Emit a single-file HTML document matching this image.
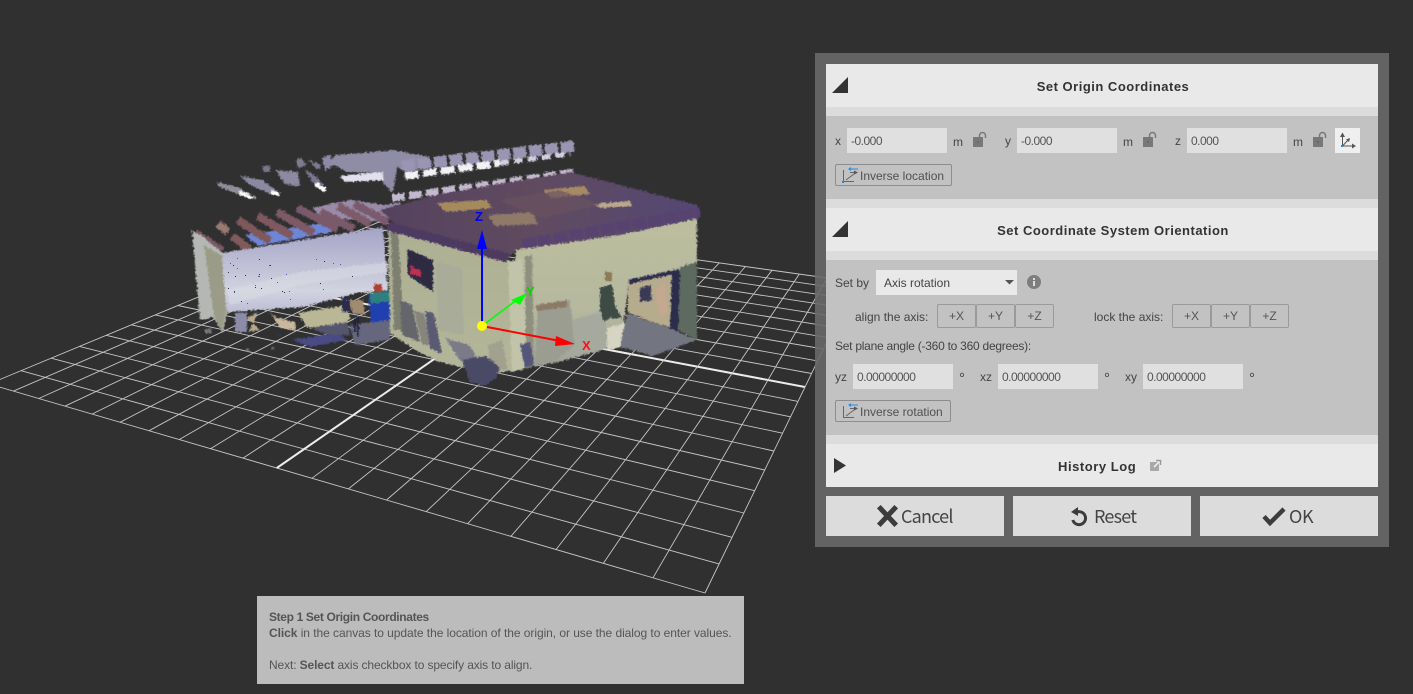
<!DOCTYPE html>
<html><head><meta charset="utf-8">
<style>
html,body{margin:0;padding:0;background:#303030}
#r{position:relative;width:1413px;height:694px;overflow:hidden;background:#303030;font-family:"Liberation Sans","Noto Sans CJK JP",sans-serif;font-size:12px;color:#444}
#r div,#r span.t{position:absolute}
.t{white-space:nowrap;line-height:16px}
.b{background:#e9e9e9;left:826px;width:552px;height:43px}
.s{background:#dcdcdc;left:826px;width:552px}
.g{background:#c2c2c2;left:826px;width:552px}
.h{left:848px;width:530px;text-align:center;font-weight:bold;font-size:13px;letter-spacing:.5px;color:#333;line-height:45px;height:43px}
.i{background:#e0e0e0;width:96px;height:25px;line-height:27px;padding-left:4px;color:#555;letter-spacing:-.5px}
.ib{border:1px solid #8d8d8d;border-radius:2px;box-sizing:border-box;height:22px;line-height:22px;color:#505050;padding-left:24px}
.bg{border:1px solid #9a9a9a;border-radius:2px;box-sizing:border-box;height:24px;width:39px;text-align:center;line-height:23px;color:#555}
.fb{background:#dcdcdc;top:496px;width:178px;height:40px}
.ft{font-family:"Noto Sans CJK JP","Liberation Sans",sans-serif;font-size:18px;line-height:40px;top:496px;color:#444;letter-spacing:-.8px}
.d{font-size:15px}
svg{position:absolute;left:0;top:0}
</style></head><body>
<div id="r">
<svg width="1413" height="694" viewBox="0 0 1413 694">
<defs>
<filter id="rough" filterUnits="userSpaceOnUse" x="0" y="0" width="1413" height="694" color-interpolation-filters="sRGB">
<feGaussianBlur in="SourceGraphic" stdDeviation=".6" result="b"/>
<feTurbulence type="fractalNoise" baseFrequency=".4" numOctaves="2" seed="3" result="n"/>
<feDisplacementMap in="b" in2="n" scale="4" xChannelSelector="R" yChannelSelector="G"/>
</filter>
<linearGradient id="ww" x1="0" y1="0" x2="0" y2="1"><stop offset="0" stop-color="#a4a3c6"/><stop offset=".45" stop-color="#c0c0d6"/><stop offset=".75" stop-color="#d2d4e0"/><stop offset="1" stop-color="#bdbdd6"/></linearGradient>
<linearGradient id="lw" x1="0" y1="0" x2="0" y2="1"><stop offset="0" stop-color="#aeb094"/><stop offset="1" stop-color="#b4b69a"/></linearGradient>
<linearGradient id="rw" x1="0" y1="0" x2="0" y2="1"><stop offset="0" stop-color="#bcbe9e"/><stop offset=".6" stop-color="#b7b99f"/><stop offset="1" stop-color="#9fa39a"/></linearGradient>
<linearGradient id="rf" x1="0" y1="0" x2="1" y2="0"><stop offset="0" stop-color="#55425e"/><stop offset=".5" stop-color="#604b60"/><stop offset="1" stop-color="#544774"/></linearGradient>
</defs>
<g id="grid" fill="none" stroke="#c6c6c6" stroke-width=".9"></g>
<g filter="url(#rough)">
<!-- back fragments -->
<polygon points="217,182 240,188 256,198 250,199 232,192 218,186" fill="#8f8f9a"/>
<polygon points="240,191 256,198 250,199 238,194" fill="#fff"/>
<polygon points="240,176 262,180 280,193 270,194 250,185" fill="#8a89a0"/>
<polygon points="272,190 280,193 278,196 270,194" fill="#fff"/>
<polygon points="276,170 298,172 300,186 285,184" fill="#8c8aa0"/>
<polygon points="262,166 270,166 270,172 263,172" fill="#77768c"/>
<polygon points="296,160 302,158 306,166 298,168" fill="#7e7a90"/>
<polygon points="305,170 316,176 326,188 312,182" fill="#7b7891"/>
<polygon points="316,182 326,188 325,192 314,186" fill="#fff"/>
<polygon points="322,158 330,155 335,165 325,170" fill="#8d8aa5"/>
<polygon points="308,160 322,165 318,170" fill="#7d7a92"/>
<polygon points="335,155 395,150 430,157 432,165 407,173 397,167 393,193 383,183 382,173 347,172 330,163" fill="#8f8ca6"/>
<path d="M402 166L575 146" stroke="#9a95b2" stroke-width="11" stroke-dasharray="13 3" fill="none"/>
<path d="M405 176L500 163" stroke="#f2f1f6" stroke-width="7" stroke-dasharray="14 4" fill="none"/>
<path d="M500 163L570 154" stroke="#d2cfdf" stroke-width="5" stroke-dasharray="9 5" fill="none"/>
<polygon points="340,176 382,172 384,180 345,182" fill="#e2e0ec"/>
<path d="M392 198L575 172" stroke="#c4b9ce" stroke-width="7" stroke-dasharray="13 4" fill="none"/>
<polygon points="312,208 350,200 385,205 400,202 400,208 385,222 352,220 320,216" fill="#9a8ca8"/>
<!-- blue sky behind beams -->
<polygon points="245,235 330,222 332,232 258,246" fill="#6f85d5"/>
<g fill="none" stroke-width="8">
<path d="M195 233L222 251" stroke="#7a5a62"/>
<path d="M218 224L228 232" stroke="#9a7a70"/>
<path d="M232 236L249 249" stroke="#805a5c"/>
<path d="M238 220L270 241" stroke="#80585c"/>
<path d="M258 216L292 236" stroke="#7f5860"/>
<path d="M277 212L314 233" stroke="#7d5a65"/>
<path d="M297 208L338 229" stroke="#7a5a6a"/>
<path d="M320 212L354 229" stroke="#7a5a6a"/>
<path d="M338 206L370 224" stroke="#7c5c6a"/>
<path d="M354 204L388 222" stroke="#7a5a6e"/>
</g>
<!-- left end + white wall -->
<polygon points="192,230 203,237 223,253 227,312 223,333 213,317 200,320" fill="#b5b7b4"/>
<polygon points="204,245 222,256 226,310 222,332 214,316" fill="#9a9c88"/>
<polygon points="222,253 383,227 388,290 357,293 303,307 227,312" fill="url(#ww)"/>
<polygon points="227,290 300,272 388,262 388,272 300,285 230,305" fill="#d8dae2" opacity=".6"/>
<!-- floor clutter -->
<polygon points="235,313 247,313 247,332 235,332" fill="#8c8ca8"/>
<polygon points="205,329 212,329 212,333 205,333" fill="#777"/>
<polygon points="247,318 258,312 254,322 248,332 260,330" fill="#b9a98c"/>
<polygon points="270,312 276,318 295,322 295,330 280,328" fill="#c9b89c"/>
<polygon points="298,313 347,305 350,318 347,323 307,328" fill="#b9b796"/>
<polygon points="293,340 337,333 347,340 310,347" fill="#4a4a85"/>
<polygon points="310,328 347,322 350,335 330,335" fill="#55556e"/>
<polygon points="348,300 363,300 365,315 353,313" fill="#a08a70"/>
<polygon points="342,298 350,298 350,312 342,312" fill="#2c2c4a"/>
<polygon points="368,294 390,292 390,330 372,328" fill="#2040b0"/>
<polygon points="370,293 390,291 390,301 370,304" fill="#2e7f80"/>
<rect x="374" y="284" width="8" height="8" fill="#b04030"/>
<polygon points="350,325 390,320 390,340 355,345" fill="#66667e"/>
<rect x="357" y="316" width="2" height="20" fill="#20203c"/>
<rect x="354" y="318" width="2" height="14" fill="#20203c"/>
<rect x="278" y="334" width="3" height="3" fill="#33334f"/>
<rect x="271" y="347" width="3" height="3" fill="#666"/>
<rect x="246" y="348" width="3" height="3" fill="#777"/>
<!-- building walls -->
<polygon points="388,225 515,262 525,368 497,373 465,368 440,362 415,350 390,333" fill="url(#lw)"/>
<polygon points="515,250 697,215 697,270 628,285 622,340 603,350 553,363 525,368" fill="url(#rw)"/>
<polygon points="436,262 462,268 464,335 438,330" fill="#a9ac98"/>
<polygon points="508,262 522,258 528,368 512,372" fill="#c2c4aa"/>
<polygon points="525,256 532,255 534,366 526,368" fill="#8e907e"/>
<polygon points="391,232 398,234 404,330 394,330" fill="#7d7f70"/>
<polygon points="538,305 570,300 575,345 553,363 535,366" fill="#9b9d90"/>
<polygon points="536,305 567,300 567,307 537,311" fill="#8a7a68"/>
<polygon points="607,328 628,322 626,346 607,350" fill="#d5d5c2"/>
<polygon points="572,320 606,310 606,348 575,355" fill="#a6a99e"/>
<!-- clutter lower left wall -->
<polygon points="400,300 412,305 420,342 402,335" fill="#65656c"/>
<polygon points="414,310 424,314 432,346 422,344" fill="#85857e"/>
<polygon points="425,310 434,314 442,354 430,348" fill="#5a5a72"/>
<polygon points="445,338 470,345 480,365 460,360" fill="#7a7a88"/>
<polygon points="488,345 502,340 508,370 490,368" fill="#a1a18e"/>
<polygon points="462,360 486,356 500,368 496,378 484,386 470,382" fill="#4a4a66"/>
<polygon points="520,345 530,342 534,365 525,368" fill="#55557a"/>
<!-- poster -->
<polygon points="407,249 433,260 433,292 408,275" fill="#2d2a42"/>
<polygon points="410,266 421,270 421,277 410,274" fill="#c03050"/>
<!-- figure on wall -->
<polygon points="600,287 612,285 615,305 622,318 610,318 604,322 600,310" fill="#3e4a44"/>
<rect x="605" y="272" width="7" height="9" fill="#8c7a58"/>
<!-- door -->
<polygon points="628,282 678,270 672,328 652,322 628,312" fill="#b5ab8d"/>
<polygon points="627,313 652,322 670,328 696,340 653,356 620,347" fill="#737580"/>
<polygon points="680,267 697,262 697,340 678,330" fill="#5d6a60"/>
<polygon points="628,280 678,269 678,273 630,284" fill="#2c2c4c"/>
<polygon points="672,272 680,270 678,330 670,328" fill="#2c2c4c"/>
<polygon points="640,288 650,285 652,300 640,302" fill="#3a3a55"/>
<polygon points="655,290 665,282 668,312 660,318" fill="#c4a890"/>
<!-- roof -->
<polygon points="380,210 440,194 570,172 697,205 700,218 620,235 515,250 505,262 460,245 400,228" fill="url(#rf)"/>
<polygon points="437,203 487,200 492,208 445,212" fill="#a58a5c"/>
<polygon points="488,215 532,212 538,224 495,226" fill="#8f7a6a"/>
<polygon points="543,190 585,186 590,194 552,198" fill="#a68a64"/>
<polygon points="593,204 630,201 632,206 600,208" fill="#b9a88c"/>
<polygon points="500,200 560,190 600,205 540,218" fill="#6a5260" opacity=".7"/>
<path d="M387 226L508 258" stroke="#4c3a60" stroke-width="9" fill="none"/>
<path d="M522 244L700 212" stroke="#584270" stroke-width="10" stroke-dasharray="14 2" fill="none"/>
</g>
<g id="spk"></g>
<!-- axes -->
<line x1="482" y1="326" x2="482" y2="245" stroke="#0000ff" stroke-width="2"/>
<polygon points="482,230 487,249 477,249" fill="#0000ff"/>
<line x1="482" y1="326" x2="522" y2="296" stroke="#00ff00" stroke-width="1.5"/>
<polygon points="527,293 520,305 511,300" fill="#00ff00"/>
<line x1="482" y1="326" x2="560" y2="341" stroke="#ff0000" stroke-width="2"/>
<polygon points="575,344 556,336 555,346" fill="#ff0000"/>
<circle cx="482" cy="326" r="5" fill="#ffff00"/>
<text x="475" y="221" fill="#0000e6" font-family="Liberation Sans" font-size="13" font-weight="bold">Z</text>
<text x="526" y="296" fill="#00d800" font-family="Liberation Sans" font-size="13" font-weight="bold">Y</text>
<text x="582" y="350" fill="#ff1010" font-family="Liberation Sans" font-size="13" font-weight="bold">X</text>
</svg>

<!-- panel -->
<div style="left:815px;top:53px;width:574px;height:494px;background:rgba(105,105,105,.9)"></div>
<div class="b" style="top:64px"></div>
<div class="s" style="top:107px;height:9px"></div>
<div class="g" style="top:116px;height:83px"></div>
<div class="s" style="top:199px;height:9px"></div>
<div class="b" style="top:208px"></div>
<div class="s" style="top:251px;height:9px"></div>
<div class="g" style="top:260px;height:175px"></div>
<div class="s" style="top:435px;height:9px"></div>
<div class="b" style="top:444px"></div>
<div class="h" style="top:64px">Set Origin Coordinates</div>
<div class="h" style="top:208px">Set Coordinate System Orientation</div>
<span class="t" style="left:1058px;top:444px;font-weight:bold;font-size:13px;letter-spacing:.55px;color:#333;line-height:45px">History Log</span>

<span class="t" style="left:835px;top:133px">x</span>
<div class="i" style="left:847px;top:128px">-0.000</div>
<span class="t" style="left:953px;top:134px">m</span>
<span class="t" style="left:1005px;top:133px">y</span>
<div class="i" style="left:1017px;top:128px">-0.000</div>
<span class="t" style="left:1123px;top:134px">m</span>
<span class="t" style="left:1175px;top:133px">z</span>
<div class="i" style="left:1187px;top:128px">0.000</div>
<span class="t" style="left:1293px;top:134px">m</span>
<div style="left:1335px;top:128px;width:25px;height:25px;background:#efefef"></div>
<div class="ib" style="left:835px;top:164px;width:117px">Inverse location</div>

<span class="t" style="left:835px;top:275px">Set by</span>
<div style="left:876px;top:270px;width:133px;padding-left:8px;height:25px;line-height:27px;background:#e9e9e9;color:#444">Axis rotation</div>
<span class="t" style="left:855px;top:309px">align the axis:</span>
<div class="bg" style="left:937px;top:304px">+X</div>
<div class="bg" style="left:976px;top:304px">+Y</div>
<div class="bg" style="left:1015px;top:304px">+Z</div>
<span class="t" style="left:1094px;top:309px">lock the axis:</span>
<div class="bg" style="left:1172px;top:304px">+X</div>
<div class="bg" style="left:1211px;top:304px">+Y</div>
<div class="bg" style="left:1250px;top:304px">+Z</div>
<span class="t" style="left:835px;top:338px;letter-spacing:-.25px">Set plane angle (-360 to 360 degrees):</span>
<span class="t" style="left:835px;top:369px">yz</span>
<div class="i" style="left:853px;top:364px">0.00000000</div>
<span class="t d" style="left:959px;top:371px">°</span>
<span class="t" style="left:980px;top:369px">xz</span>
<div class="i" style="left:998px;top:364px">0.00000000</div>
<span class="t d" style="left:1104px;top:371px">°</span>
<span class="t" style="left:1125px;top:369px">xy</span>
<div class="i" style="left:1143px;top:364px">0.00000000</div>
<span class="t d" style="left:1249px;top:371px">°</span>
<div class="ib" style="left:835px;top:400px;width:116px">Inverse rotation</div>

<div class="fb" style="left:826px"></div>
<div class="fb" style="left:1013px"></div>
<div class="fb" style="left:1200px"></div>
<span class="t ft" style="left:901px">Cancel</span>
<span class="t ft" style="left:1094px">Reset</span>
<span class="t ft" style="left:1289px;letter-spacing:-.4px">OK</span>

<svg width="1413" height="694" viewBox="0 0 1413 694" style="pointer-events:none">
<polygon points="832,93 848,93 848,77" fill="#333"/>
<polygon points="832,237 848,237 848,221" fill="#333"/>
<polygon points="834,458 834,473 846,465.500" fill="#333"/>
<!-- locks -->
<g fill="#787878">
<g><rect x="973" y="137" width="10" height="10"/><path d="M979.500 137V135.500a3 3 0 0 1 6 0V138" fill="none" stroke="#787878" stroke-width="1.500"/><rect x="977" y="141" width="2" height="2" fill="#696969"/></g>
<g transform="translate(170 0)"><rect x="973" y="137" width="10" height="10"/><path d="M979.500 137V135.500a3 3 0 0 1 6 0V138" fill="none" stroke="#787878" stroke-width="1.500"/><rect x="977" y="141" width="2" height="2" fill="#696969"/></g>
<g transform="translate(340 0)"><rect x="973" y="137" width="10" height="10"/><path d="M979.500 137V135.500a3 3 0 0 1 6 0V138" fill="none" stroke="#787878" stroke-width="1.500"/><rect x="977" y="141" width="2" height="2" fill="#696969"/></g>
</g>
<!-- axes button icon -->
<g fill="none" stroke="#555" stroke-width="1">
<path d="M1342.500 136V146H1354"/><path d="M1342.500 146L1349 139"/>
</g>
<polygon points="1342.500,132.500 1345,137 1340,137" fill="#555"/>
<polygon points="1356,146 1352,143.500 1352,148.500" fill="#555"/>
<polygon points="1350,138 1349,142 1346,139.500" fill="#555"/>
<rect x="1341" y="145" width="2" height="2" fill="#1e88e5"/>
<!-- inverse icons -->
<g>
<path d="M843.500 170V182M844 181.500H854M846 180L856 172.500H850" fill="none" stroke="#666" stroke-width="1"/>
<polygon points="858,172.500 854,170.500 854,174.500" fill="#555"/>
<path d="M850 169H858" stroke="#2b8ae0" stroke-width="1"/><polygon points="848,169 851,167 851,171" fill="#2b8ae0"/>
<rect x="842" y="181" width="2" height="2" fill="#1e88e5"/>
</g>
<g transform="translate(0 236)">
<path d="M843.500 170V182M844 181.500H854M846 180L856 172.500H850" fill="none" stroke="#666" stroke-width="1"/>
<polygon points="858,172.500 854,170.500 854,174.500" fill="#555"/>
<path d="M850 169H858" stroke="#2b8ae0" stroke-width="1"/><polygon points="848,169 851,167 851,171" fill="#2b8ae0"/>
</g>
<!-- select arrow -->
<polygon points="1005,280 1014,280 1009.500,284.500" fill="#555"/>
<!-- info -->
<circle cx="1034" cy="282" r="7" fill="#7e7e7e"/>
<rect x="1033" y="281" width="2" height="5" fill="#ddd"/><rect x="1033" y="278" width="2" height="2" fill="#ddd"/>
<!-- external -->
<rect x="1150" y="462" width="9" height="9" fill="#a8a8a8"/>
<path d="M1154 467L1160 461" stroke="#f2f2f2" stroke-width="1.500" fill="none"/>
<path d="M1156 460.500H1160.500V465" fill="none" stroke="#999" stroke-width="1.500"/>
<!-- cancel -->
<path d="M880.500 508.500L894.500 523.500M894.500 508.500L880.500 523.500" stroke="#3c3c3c" stroke-width="5" stroke-linecap="square" fill="none"/>
<!-- reset -->
<path d="M1074.500 513.500A6.500 6.500 0 1 1 1072.800 520" fill="none" stroke="#3c3c3c" stroke-width="3"/>
<polygon points="1078,507 1078,516 1071,512" fill="#3c3c3c"/>
<!-- ok -->
<path d="M1264 516.500L1270 523L1284 509" fill="none" stroke="#3c3c3c" stroke-width="4.500"/>
</svg>

<!-- tooltip -->
<div style="left:257px;top:596px;width:487px;height:88px;background:#bcbcbc"></div>
<span class="t" style="left:269px;top:609px;color:#555;font-weight:bold;letter-spacing:-.35px">Step 1 Set Origin Coordinates</span>
<span class="t" style="left:269px;top:625px;color:#555;letter-spacing:-.055px"><b>Click</b> in the canvas to update the location of the origin, or use the dialog to enter values.</span>
<span class="t" style="left:269px;top:657px;color:#555;letter-spacing:-.12px">Next: <b>Select</b> axis checkbox to specify axis to align.</span>
</div>
<script>
(function(){
var L=[-11,384],B=[705,593],R=[856,282],T=[391,217];
var x0=L[0],y0=L[1],x1=B[0],y1=B[1],x2=R[0],y2=R[1],x3=T[0],y3=T[1];
var dx1=x1-x2,dx2=x3-x2,sx=x0-x1+x2-x3,dy1=y1-y2,dy2=y3-y2,sy=y0-y1+y2-y3;
var den=dx1*dy2-dx2*dy1;
var g=(sx*dy2-dx2*sy)/den,h=(dx1*sy-sx*dy1)/den;
var a=x1-x0+g*x1,b=x3-x0+h*x3,c=x0,d=y1-y0+g*y1,e=y3-y0+h*y3,f=y0;
function P(u,v){var w=g*u+h*v+1;return [((a*u+b*v+c)/w).toFixed(1),((d*u+e*v+f)/w).toFixed(1)];}
var s='',i;
for(i=0;i<=20;i++){
 var t=i/20,m=(i==10);
 var p=P(t,0),q=P(t,1),p2=P(0,t),q2=P(1,t);
 var st=m?' stroke="#ececec" stroke-width="2"':'';
 s+='<line x1="'+p[0]+'" y1="'+p[1]+'" x2="'+q[0]+'" y2="'+q[1]+'"'+st+'/>';
 s+='<line x1="'+p2[0]+'" y1="'+p2[1]+'" x2="'+q2[0]+'" y2="'+q2[1]+'"'+st+'/>';
}
document.getElementById('grid').innerHTML=s;
var seed=7;function r(){seed=(seed*16807)%2147483647;return seed/2147483647;}
var k='';
for(i=0;i<36;i++){
 var x=228+r()*r()*150,y=258+r()*48;
 k+='<rect x="'+x.toFixed(0)+'" y="'+y.toFixed(0)+'" width="1" height="1" fill="'+(r()<.5?'#303040':'#5060b0')+'"/>';
}
document.getElementById('spk').innerHTML=k;
})();
</script>
</body></html>
